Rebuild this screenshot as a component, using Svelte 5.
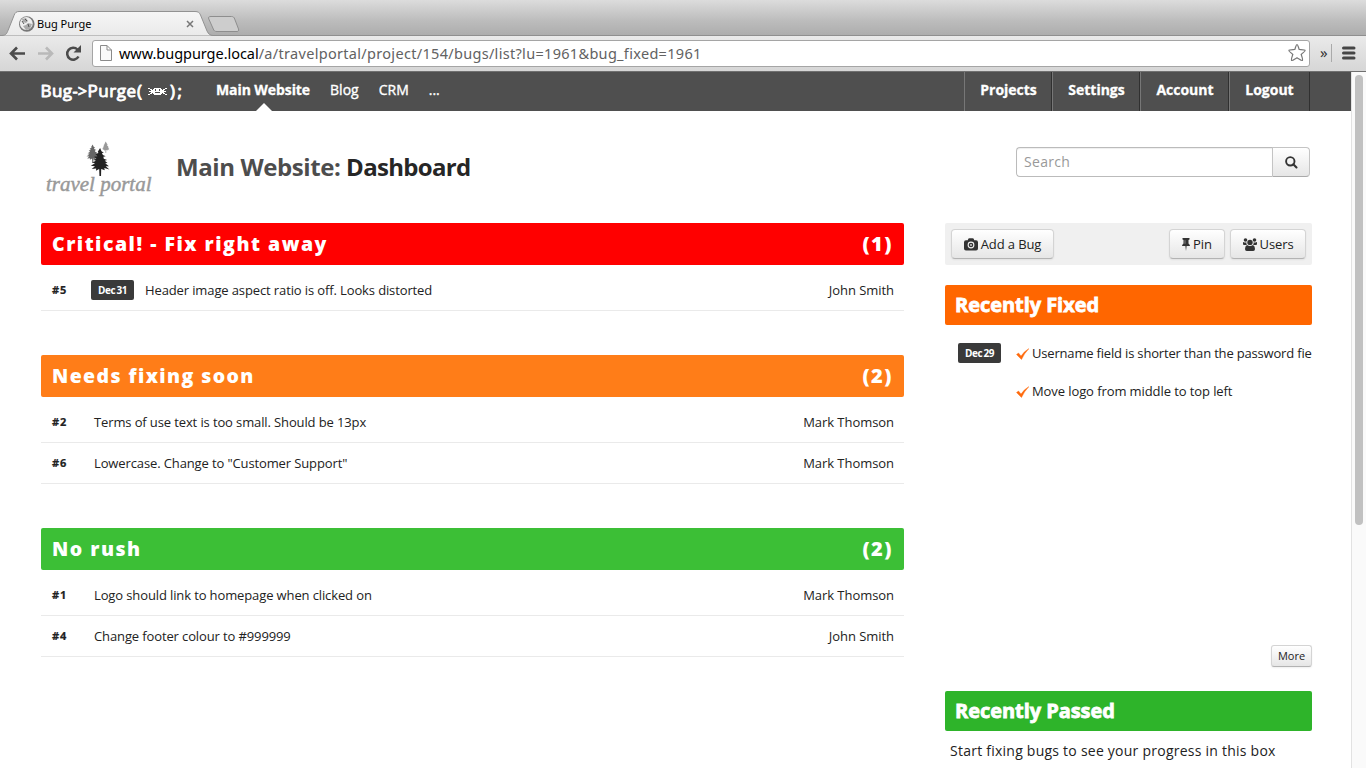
<script>
  const tabs = ['Blog', 'CRM', '...'];
  const links = [
    { name: 'Projects', w: 88 },
    { name: 'Settings', w: 88 },
    { name: 'Account', w: 89 },
    { name: 'Logout', w: 80 }
  ];
  const groups = [
    { title: 'Critical! - Fix right away', kind: 'critical', bugs: [
      { id: 5, date: 'Dec 31', text: 'Header image aspect ratio is off. Looks distorted', who: 'John Smith' }
    ] },
    { title: 'Needs fixing soon', kind: 'soon', bugs: [
      { id: 2, text: 'Terms of use text is too small. Should be 13px', who: 'Mark Thomson' },
      { id: 6, text: 'Lowercase. Change to "Customer Support"', who: 'Mark Thomson' }
    ] },
    { title: 'No rush', kind: 'rush', bugs: [
      { id: 1, text: 'Logo should link to homepage when clicked on', who: 'Mark Thomson' },
      { id: 4, text: 'Change footer colour to #999999', who: 'John Smith' }
    ] }
  ];
  const fixed = [
    { date: 'Dec 29', text: 'Username field is shorter than the password fie' },
    { text: 'Move logo from middle to top left' }
  ];
</script>

{#snippet tree(x, y, s, color)}
  <path transform="translate({x} {y}) scale({s})" fill={color}
    d="M10 0L11.500 3.500 14 5 12 5.500 13 7.500 16 9 13.500 9.500 14 11.500 17.500 13 15 13.800 18 16 15.500 16.500 19.500 19.500 16 19.500 20 23 14.500 21.500 15 24 11.200 22.500 11 30H9.300L9 22.500 5.500 24.500 5.800 22 1 22.500 4.500 19.500 0 19 4.500 16.500 1.500 15.500 5.500 13.800 2.500 12.500 6 11.500 3.500 9.500 7 8.800 5 6.500 8.200 5.500 7.500 4z" />
{/snippet}

<div class="window">
  <div class="tabstrip">
    <svg width="250" height="36" viewBox="0 0 250 36">
      <defs>
        <linearGradient id="tab" x1="0" y1="0" x2="0" y2="1"><stop offset="0" stop-color="#f6f6f6" /><stop offset="1" stop-color="#eaeaea" /></linearGradient>
      </defs>
      <path d="M0 35.500H2C6 35.500 7 33 8 30.500L14 15.500C15 12.500 16.500 11.500 19 11.500H195C198 11.500 199.500 12.500 200.500 15L207 31C208.500 34 210 35.500 213 35.500H250V36H0z" fill="url(#tab)" stroke="#929292" />
      <path d="M211 16.500H231.500C233 16.500 234 17 234.700 19L238.500 29C239 30.700 238.300 31.500 237 31.500H217C215 31.500 214 31 213.300 29L208.800 19C208 17 209 16.500 211 16.500z" fill="#cdcdcd" stroke="#8e8e8e" />
      <circle cx="26.800" cy="24" r="7.800" fill="#777" />
      <circle cx="26.300" cy="23.500" r="6.400" fill="#eee" />
      <path d="M22 19l4-1 2 3-2 2-3-1zm6 4l4 1-2 5-4 1-3-4 3-1z" fill="#aaa" />
      <path d="M22 21l2 3m1-5l2 2m1 3l1 3" stroke="#555" />
      <path d="M187 21l6 6m0-6l-6 6" stroke="#777" stroke-width="1.500" />
    </svg>
    <span class="tabname">Bug Purge</span>
  </div>
  <div class="toolbar">
    <svg class="nav" width="82" height="34" viewBox="0 0 82 34">
      <path d="M25 17.500H12M17 11.500l-6 6 6 6" fill="none" stroke="#4b4b4b" stroke-width="2.600" />
      <path d="M38 17.500H51M46 11.500l6 6-6 6" fill="none" stroke="#b9b9b9" stroke-width="2.600" />
      <path d="M78.500 20.500a6 6 0 1 1-1-7" fill="none" stroke="#4b4b4b" stroke-width="2.500" />
      <path d="M81 9v7.500h-7.500z" fill="#4b4b4b" />
    </svg>
    <div class="address">
      <svg width="12" height="16" viewBox="0 0 12 16"><path d="M.5 .5H7L11.500 5V15.500H.5zM7 .5V5h4.500" fill="#fafafa" stroke="#8a8a8a" /></svg>
      <span class="url"><b>www.bugpurge.local</b>/a/travelportal/project/154/bugs/list?lu=1961&amp;bug_fixed=1961</span>
      <svg class="star" width="20" height="20" viewBox="0 0 20 20"><path d="M10 1.500c.8 0 1.300 2.500 2.200 5 2.300.2 5.800.2 6 1 .2.700-2.200 2.200-4 4 .7 2 1.800 5.500 1.200 6-.7.500-3.400-1.600-5.400-2.800-2 1.200-4.700 3.300-5.400 2.800-.6-.5.500-4 1.200-6-1.800-1.800-4.200-3.300-4-4 .2-.8 3.700-.8 6-1 .9-2.500 1.400-5 2.200-5z" fill="#fff" stroke="#777" stroke-width="1.200" /></svg>
    </div>
    <span class="chev">»</span>
    <span class="sep"></span>
    <svg class="menu" width="14" height="14" viewBox="0 0 14 14"><path d="M1.500 2h10.500M1.500 7h10.500M1.500 12h10.500" stroke="#464646" stroke-width="3" stroke-linecap="round" /></svg>
  </div>

  <div class="view">
    <div class="page">
      <header>
        <svg class="logo" width="150" height="39" viewBox="0 0 150 39">
          <g fill="#fff" stroke="#fff" stroke-width=".9" stroke-linejoin="round" font-family="Open Sans, sans-serif" font-size="17" font-weight="500">
            <text x="4.500" y="25" textLength="31.500" lengthAdjust="spacing">Bug</text>
            <text x="36.500" y="25" textLength="14.500" lengthAdjust="spacingAndGlyphs">-&gt;</text>
            <text x="51.500" y="25" textLength="48.500" lengthAdjust="spacing">Purge</text>
            <text x="101" y="24.500">(</text>
            <text x="134" y="24.500">)</text>
            <text x="141.500" y="25">;</text>
          </g>
          <g fill="#fff" shape-rendering="crispEdges">
            <path fill-rule="evenodd" d="M118 16h7v1h1v5h-1v1h-7v-1h-1v-5h1zM119 17v2h1v-2zM123 17v2h1v-2zM119 20v1h5v-1z" />
            <path d="M112 16h2v1h-2zM114 17h2v1h-2zM113 19h3v1h-3zM114 21h2v1h-2zM112 22h2v1h-2zM115 18h2v3h-2zM129 16h2v1h-2zM127 17h2v1h-2zM127 19h3v1h-3zM127 21h2v1h-2zM129 22h2v1h-2zM126 18h2v3h-2z" />
          </g>
        </svg>
        <nav>
          <span class="current">Main Website</span>
          {#each tabs as t}<span>{t}</span>{/each}
        </nav>
        <div class="links">
          {#each links as l}<span style="width:{l.w}px">{l.name}</span>{/each}
        </div>
      </header>

      <div class="title">
        <svg width="116" height="64" viewBox="0 0 116 64">
          {@render tree(61, 4.500, 0.38, '#999')}
          {@render tree(45.500, 7.500, 0.62, '#666')}
          {@render tree(49.800, 11, 0.93, '#222')}
          <text x="5" y="53.500" textLength="105.500" lengthAdjust="spacingAndGlyphs" font-family="Liberation Serif, serif" font-style="italic" font-size="21" fill="#999" stroke="#999" stroke-width=".45">travel portal</text>
        </svg>
        <h1><span>Main Website:</span> Dashboard</h1>
        <div class="search">
          <span class="field">Search</span>
          <span class="go"><svg width="13" height="13" viewBox="0 0 13 13"><circle cx="5.300" cy="5.300" r="4.200" fill="none" stroke="#333" stroke-width="1.900" /><path d="M8.300 8.300l3.200 3.200" stroke="#333" stroke-width="2.100" stroke-linecap="round" /></svg></span>
        </div>
      </div>

      <div class="columns">
        <main>
          {#each groups as g}
            <section>
              <h2 class={g.kind}><span>{g.title}</span><span class="count">({g.bugs.length})</span></h2>
              {#each g.bugs as b}
                <div class="bug">
                  <span class="id">#{b.id}</span>
                  {#if b.date}<span class="date">{b.date}</span>{/if}
                  <span class="desc">{b.text}</span>
                  <span class="who">{b.who}</span>
                </div>
              {/each}
            </section>
          {/each}
        </main>
        <aside>
          <div class="actions">
            <span class="btn add"><svg width="14" height="13" viewBox="0 0 14 13"><path fill-rule="evenodd" d="M4 1.500Q4.300.3 5.500.3h3q1.200 0 1.500 1.200l.2.700H12q2 0 2 2v6.300q0 2-2 2H2q-2 0-2-2V4.200q0-2 2-2h1.800zM7 3.600a3.400 3.400 0 1 0 0 6.800 3.400 3.400 0 0 0 0-6.800z" fill="#333" /><circle cx="7" cy="7" r="2.300" fill="#333" /><circle cx="7" cy="7" r=".9" fill="#ddd" /></svg>Add a Bug</span>
            <span class="btn pin"><svg width="8" height="13" viewBox="0 0 8 13"><path d="M.5 0h7v1.500L6.500 2v3.500Q8 6.500 8 8H4.600L4 13l-.6-5H0q0-1.500 1.500-2.500V2l-1-.5z" fill="#333" /><path d="M3 2.200v3.600" stroke="#aaa" stroke-width=".7" /></svg>Pin</span>
            <span class="btn users"><svg width="14" height="13" viewBox="0 0 14 13"><g fill="#333"><circle cx="2.500" cy="2" r="1.800" /><circle cx="11.500" cy="2" r="1.800" /><path d="M0 4q1 .5 3.500.5Q3 6 4 7H1Q0 7 0 6zM14 4q-1 .5-3.500.5Q11 6 10 7h3q1 0 1-1zM4 7q3 1.800 6 0 2 .8 2 4 0 2-1.800 2H3.800Q2 13 2 11q0-3.200 2-4z" /><circle cx="7" cy="4.400" r="2.700" /></g></svg>Users</span>
          </div>
          <h3 class="fixed">Recently Fixed</h3>
          <div class="list">
            {#each fixed as f}
              <div class="fix">
                <span class="slot">{#if f.date}<span class="date">{f.date}</span>{/if}</span>
                <svg width="13" height="12" viewBox="0 0 13 12"><path d="M.5 6.500L2.500 5l2.500 3Q8.500 3 13 .5 8.500 5 5.500 11.500z" fill="#ff6a0c" stroke="#ff6a0c" stroke-width=".4" /></svg>
                <span class="desc" class:long={f.date}>{f.text}</span>
              </div>
            {/each}
            <span class="btn more">More</span>
          </div>
          <h3 class="passed">Recently Passed</h3>
          <p>Start fixing bugs to see your progress in this box</p>
        </aside>
      </div>
    </div>
    <div class="track"><div class="thumb"></div></div>
  </div>
</div>

<style>
  :global(body) { margin: 0; background: #fff; overflow: hidden; }
  * { box-sizing: border-box; }
  .window { width: 1366px; height: 768px; overflow: hidden; display: flex; flex-direction: column; font-family: 'Open Sans', sans-serif; font-size: 13px; color: #222; }
  svg { display: block; flex: none; }
  span { white-space: nowrap; }
  .tabstrip { height: 36px; flex: none; background: linear-gradient(#dcdcdc, #bcbcbc 60%, #adadad); border-bottom: 1px solid #8f8f8f; position: relative; }
  .tabname { position: absolute; left: 37px; top: 16px; font: 11px/16px 'Noto Sans', sans-serif; letter-spacing: 0; color: #000; }
  .toolbar { height: 36px; flex: none; display: flex; align-items: center; background: linear-gradient(#eaeaea, #d6d6d6); border-bottom: 1px solid #707070; padding-bottom: 1px; }
  .address { width: 1218px; height: 27px; margin-left: 10px; padding: 0 4px 0 7px; background: #fff; border: 1px solid #a5a5a5; border-radius: 3px; display: flex; align-items: center; }
  .url { margin-left: 7px; font: 14.500px/24px 'Noto Sans', sans-serif; letter-spacing: .31px; color: #626262; }
  .url b { font-weight: 400; color: #000; letter-spacing: -.04px; }
  .star { margin-left: auto; margin-right: -2px; }
  .chev { margin-left: 10px; margin-top: -3px; font: 15px/16px 'Noto Sans', sans-serif; color: #333; width: 11px; }
  .sep { width: 1px; height: 18px; background: #aaa; }
  .menu { margin-left: 10px; }
  .view { flex: 1; min-height: 0; display: flex; }
  .page { width: 1351px; height: 696px; overflow: hidden; }
  .track { width: 15px; background: #fafafa; border-left: 1px solid #e2e2e2; padding: 3px 3px 0; }
  .thumb { height: 450px; width: 8px; border-radius: 4px; background: #c1c1c1; }
  header { height: 39px; background: #4f4f4f; color: #fff; display: flex; padding-left: 36px; }
  nav { display: flex; gap: 20px; margin-left: 30px; font-size: 14px; line-height: 36px; -webkit-text-stroke: .35px #fff; }
  .current { font-weight: 700; position: relative; letter-spacing: -.08px; -webkit-text-stroke: .3px #fff; }
  .current::after { content: ''; position: absolute; left: 40px; bottom: 0; border: 8px solid transparent; border-top: 0; border-bottom-color: #fff; }
  .links { margin-left: auto; margin-right: 41px; display: flex; border-right: 1px solid #303030; font-size: 14px; font-weight: 700; line-height: 36px; }
  .links span { text-align: center; border-left: 1px solid #777; box-shadow: -1px 0 #303030; letter-spacing: -.02px; -webkit-text-stroke: .3px #fff; }
  .links span:first-child { box-shadow: none; }
  .title { height: 112px; display: flex; padding: 26px 41px 0 41px; }
  h1 { margin: 13px 0 0 19px; font-size: 24px; line-height: 34px; font-weight: 700; letter-spacing: -.68px; color: #262626; }
  h1 span { color: #4d4d4d; letter-spacing: -.4px; }
  .search { margin: 10px 0 0 auto; width: 294px; height: 30px; display: flex; }
  .field { flex: 1; border: 1px solid #bbb; border-right: 0; border-radius: 4px 0 0 4px; font-size: 14px; line-height: 27px; padding-left: 7px; letter-spacing: .3px; color: #999; box-shadow: inset 0 1px 1px #0001; }
  .go { width: 38px; border: 1px solid #c4c4c4; border-bottom-color: #aaa; border-radius: 0 4px 4px 0; background: linear-gradient(#fff, #e6e6e6); display: flex; align-items: center; justify-content: center; }
  .columns { display: flex; gap: 41px; padding-left: 41px; }
  main { width: 863px; }
  section { margin-bottom: 44px; }
  h2 { margin: 0 0 5px; height: 42px; border-radius: 2px; color: #fff; font-size: 19.500px; line-height: 42px; font-weight: 800; letter-spacing: 1.500px; display: flex; justify-content: space-between; padding: 0 11px; }
  .soon { letter-spacing: 1.400px; }
  .count { font-size: 20px; letter-spacing: 1.500px; }
  .critical { background: #f00; }
  .soon { background: #ff7d18; }
  .rush { background: #3cbf36; }
  .bug { height: 41px; border-bottom: 1px solid #eaeaea; display: flex; align-items: center; padding: 0 10px; }
  .id { width: 43px; padding-left: 1px; font-size: 11px; line-height: 16px; font-weight: 700; letter-spacing: .9px; -webkit-text-stroke: .2px #222; }
  .desc { letter-spacing: -.12px; }
  .date { width: 43px; height: 20px; border-radius: 2px; background: #3a3a3a; color: #fff; font-size: 10px; line-height: 20px; font-weight: 700; letter-spacing: -.4px; word-spacing: -1px; text-align: center; }
  .bug .date { margin: 0 11px 0 -3px; }
  .who { margin-left: auto; letter-spacing: -.05px; }
  aside { width: 367px; }
  .actions { height: 42px; background: #f0f0f0; border-radius: 2px; display: flex; padding: 6px; }
  .btn { height: 30px; border: 1px solid #d4d4d4; border-bottom-color: #b3b3b3; border-radius: 4px; background: linear-gradient(#fff, #e6e6e6); display: flex; align-items: center; justify-content: center; gap: 3px; box-shadow: 0 1px 2px #0001; letter-spacing: -.1px; }
  .add { width: 103px; }
  .pin { width: 56px; margin-left: auto; margin-right: 5px; }
  .users { width: 76px; }
  h3 { margin: 0; height: 40px; border-radius: 2px; color: #fff; font-size: 20px; line-height: 40px; font-weight: 700; letter-spacing: -.05px; padding-left: 10px; -webkit-text-stroke: .8px #fff; }
  .fixed { margin-top: 20px; background: #f60; }
  .passed { background: #2eb42a; }
  .list { height: 366px; padding-top: 9px; display: flex; flex-direction: column; }
  .fix { height: 38px; display: flex; align-items: center; padding-left: 13px; }
  .slot { width: 58px; flex: none; }
  .slot .date { display: block; }
  .fix svg { margin-top: 2px; }
  .fix .desc { margin-left: 3px; letter-spacing: -.09px; }
  .fix .long { letter-spacing: -.18px; }
  .more { width: 41px; height: 22px; font-size: 11px; border-radius: 3px; margin: auto 0 24px auto; padding-bottom: 1px; letter-spacing: 0; }
  p { margin: 8px 0 0 5px; font-size: 14px; line-height: 24px; letter-spacing: .24px; white-space: nowrap; }
</style>
